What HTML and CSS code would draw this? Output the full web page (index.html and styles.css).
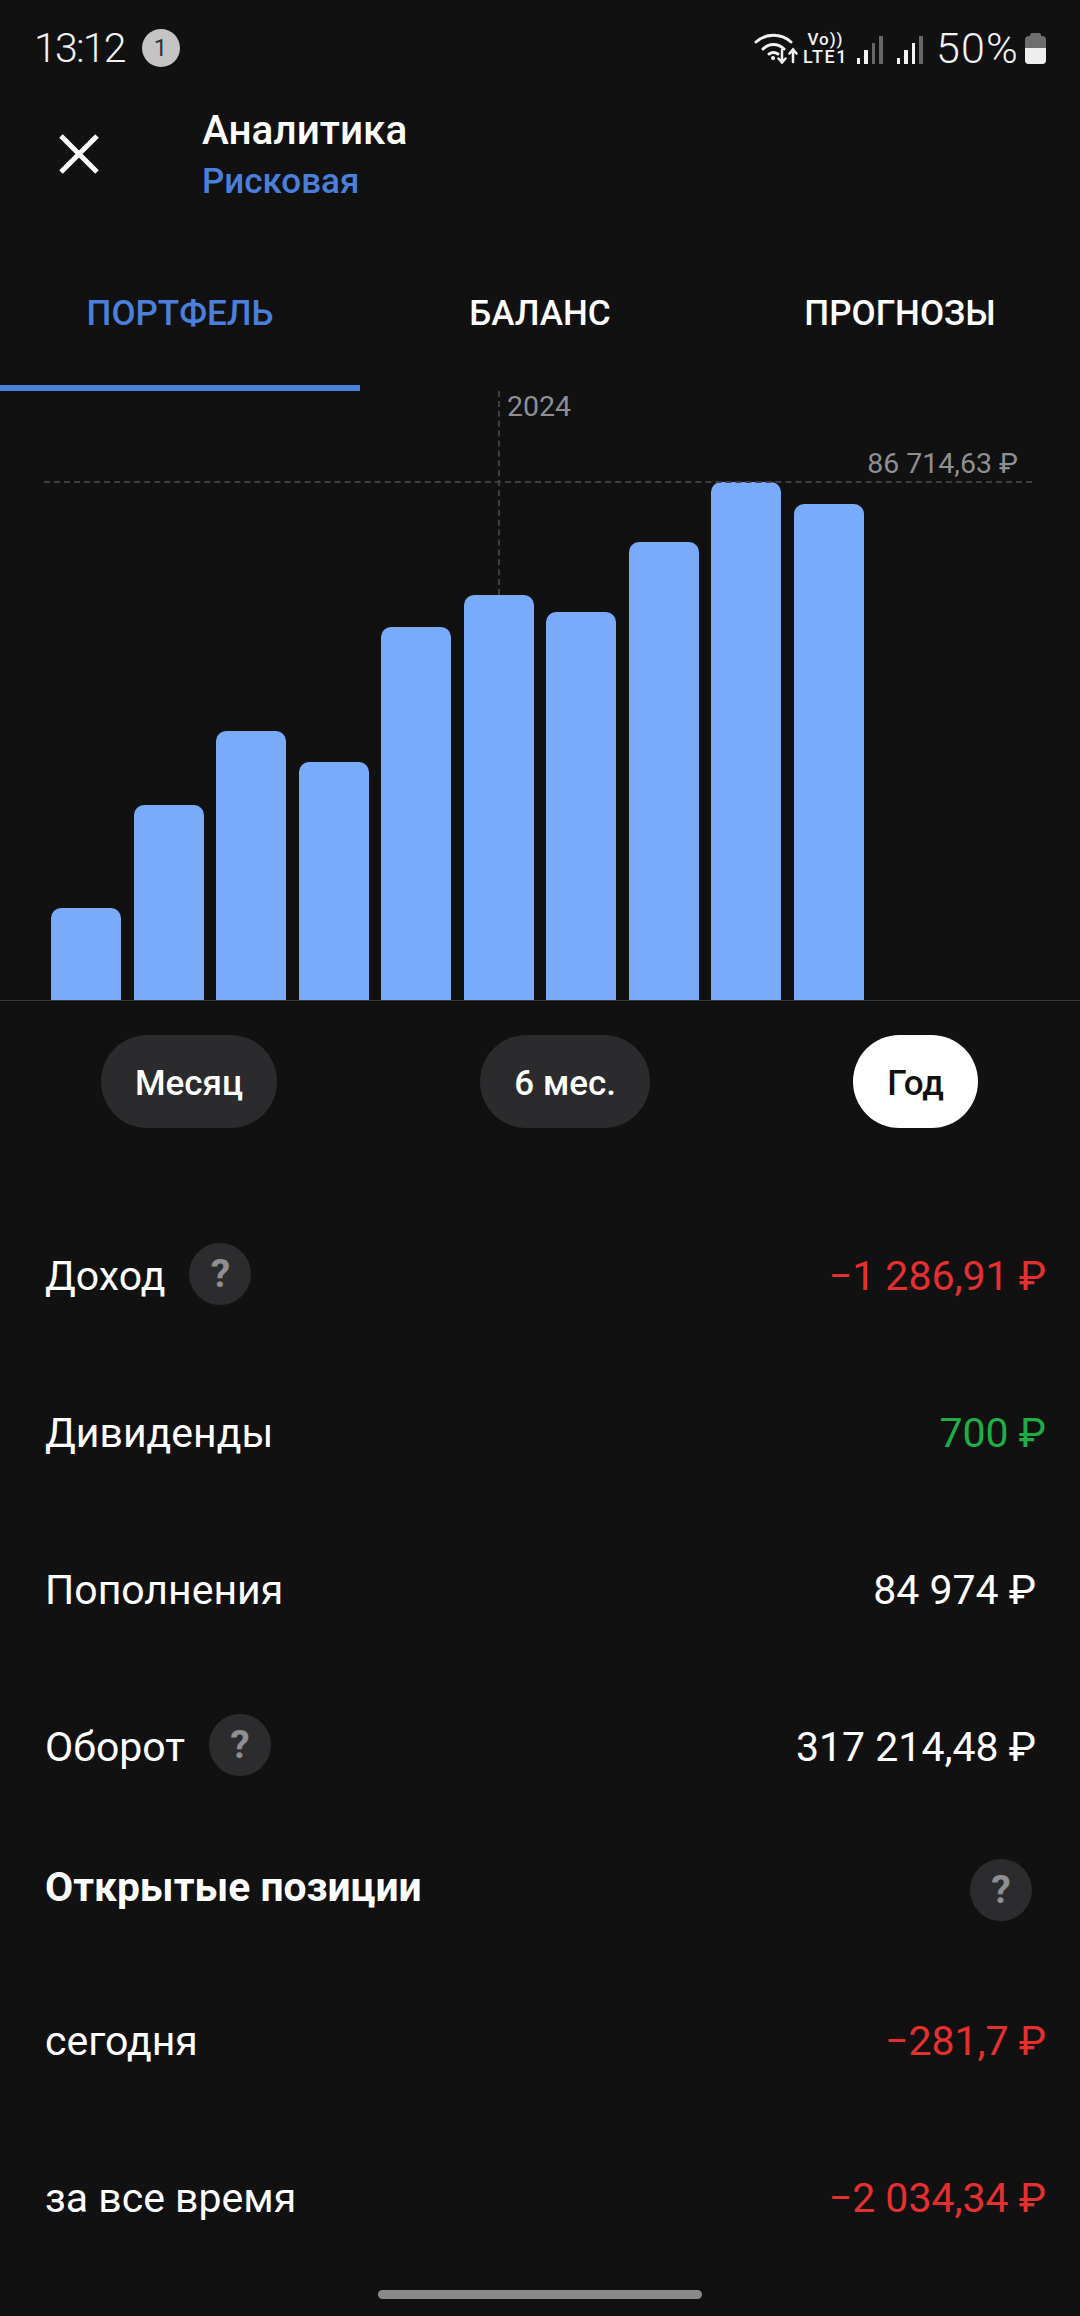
FILE: index.html
```html
<!DOCTYPE html>
<html lang="ru">
<head>
    <meta charset="UTF-8">
    <meta name="viewport" content="width=device-width, initial-scale=1.0">
    <title>Аналитика</title>
    <link rel="stylesheet" href="styles.css">
</head>
<body>

    <div class="status-bar">
        <div class="status-left">
            <span class="clock">13:12</span>
            <span class="notif">1</span>
        </div>
        <div class="status-right">
            <svg class="wifi" width="44" height="32" viewBox="0 0 44 32" fill="none" stroke="#f2f2f2" stroke-width="3" stroke-linecap="round">
                <path d="M2 10C12 1 27 1 37 10"/>
                <path d="M9 17C15 11 24 11 30 17"/>
                <path d="M15 22C18 20 21 20 24 22"/>
                <circle cx="19" cy="26" r="2" fill="#f2f2f2" stroke="none"/>
                <path d="M28 18V30M24.500 26.500L28 30.500L31.500 26.500" stroke-width="2.500"/>
                <path d="M39 30V18M35.500 21.500L39 17.500L42.500 21.500" stroke-width="2.500"/>
            </svg>
            <div class="volte">
                <span class="volte-top">Vo))</span>
                <span class="volte-bottom">LTE1</span>
            </div>
            <div class="signal signal-first">
                <i class="s1"></i><i class="s2"></i><i class="s3 dim"></i><i class="s4 dim"></i>
            </div>
            <div class="signal">
                <i class="s1"></i><i class="s2"></i><i class="s3"></i><i class="s4 dim"></i>
            </div>
            <span class="percent">50%</span>
            <div class="battery"><div class="battery-fill"></div></div>
        </div>
    </div>

    <div class="header">
        <svg class="close" width="44" height="44" viewBox="0 0 44 44" stroke="#fff" stroke-width="5">
            <path d="M4 4L40 40M40 4L4 40"/>
        </svg>
        <div class="header-text">
            <div class="title">Аналитика</div>
            <div class="subtitle">Рисковая</div>
        </div>
    </div>

    <div class="tabs">
        <div class="tab active">ПОРТФЕЛЬ</div>
        <div class="tab">БАЛАНС</div>
        <div class="tab">ПРОГНОЗЫ</div>
    </div>

    <div class="chart">
        <div class="bars">
            <div class="bar" style="height: 92px"></div>
            <div class="bar" style="height: 195px"></div>
            <div class="bar" style="height: 269px"></div>
            <div class="bar" style="height: 238px"></div>
            <div class="bar" style="height: 373px"></div>
            <div class="bar" style="height: 405px"></div>
            <div class="bar" style="height: 388px"></div>
            <div class="bar" style="height: 458px"></div>
            <div class="bar" style="height: 518px"></div>
            <div class="bar" style="height: 496px"></div>
        </div>
        <div class="year-line"></div>
        <div class="year-label">2024</div>
        <div class="max-line"></div>
        <div class="max-label">86 714,63 ₽</div>
    </div>

    <div class="periods">
        <div class="pill">Месяц</div>
        <div class="pill">6 мес.</div>
        <div class="pill selected">Год</div>
    </div>

    <div class="stats">
        <div class="row">
            <div class="row-label">Доход <span class="help">?</span></div>
            <div class="value red">−1 286,91 ₽</div>
        </div>
        <div class="row">
            <div class="row-label">Дивиденды</div>
            <div class="value green">700 ₽</div>
        </div>
        <div class="row">
            <div class="row-label">Пополнения</div>
            <div class="value plain">84 974 ₽</div>
        </div>
        <div class="row">
            <div class="row-label">Оборот <span class="help">?</span></div>
            <div class="value plain">317 214,48 ₽</div>
        </div>
        <div class="section-head">
            <div class="section-title">Открытые позиции</div>
            <span class="help section-help">?</span>
        </div>
        <div class="row">
            <div class="row-label">сегодня</div>
            <div class="value red">−281,7 ₽</div>
        </div>
        <div class="row">
            <div class="row-label">за все время</div>
            <div class="value red">−2 034,34 ₽</div>
        </div>
    </div>

    <div class="home-bar"></div>

</body>
</html>
```

FILE: styles.css
```css
* {
    box-sizing: border-box;
}

html, body {
    margin: 0;
    padding: 0;
}

body {
    width: 1080px;
    height: 2316px;
    overflow: hidden;
    background-color: #111112;
    color: #fff;
    font-family: Roboto, "Noto Sans", sans-serif;
}

/* status bar */
.status-bar {
    height: 96px;
    padding: 0 34px;
    display: flex;
    justify-content: space-between;
    align-items: center;
}

.status-left {
    display: flex;
    align-items: center;
    gap: 17px;
}

.clock {
    font-size: 41px;
    font-weight: 300;
    letter-spacing: -1.800px;
    color: #f2f2f2;
}

.notif {
    width: 38px;
    height: 38px;
    border-radius: 50%;
    background-color: #c4c4c4;
    color: #333;
    font-size: 24px;
    display: flex;
    justify-content: center;
    align-items: center;
}

.status-right {
    display: flex;
    align-items: center;
}

.wifi {
    margin-right: 5px;
}

.volte {
    display: flex;
    flex-direction: column;
    align-items: center;
    color: #f2f2f2;
    font-weight: 500;
    line-height: 18px;
}

.volte-top {
    font-size: 17px;
    letter-spacing: 1px;
}

.volte-bottom {
    font-size: 18px;
    letter-spacing: 1.500px;
}

.signal {
    display: flex;
    align-items: flex-end;
    gap: 4px;
    height: 28px;
    margin-left: 14px;
    margin-top: 4px;
}

.signal-first {
    margin-left: 9px;
}

.signal i {
    display: block;
    width: 3.500px;
    background-color: #f2f2f2;
}

.signal .dim {
    background-color: #666;
}

.signal .s1 { height: 6px; }
.signal .s2 { height: 14px; }
.signal .s3 { height: 21px; }
.signal .s4 { height: 28px; }

.percent {
    font-size: 43px;
    font-weight: 300;
    letter-spacing: 1.200px;
    color: #f2f2f2;
    margin-left: 13px;
}

.battery {
    position: relative;
    width: 21px;
    height: 28px;
    margin-left: 6px;
    margin-top: 4px;
    border-radius: 4px;
    background-color: #6e6e6e;
    display: flex;
    align-items: flex-end;
}

.battery::before {
    content: "";
    position: absolute;
    left: 5px;
    top: -3px;
    width: 11px;
    height: 4px;
    border-radius: 2px 2px 0 0;
    background-color: #6e6e6e;
}

.battery-fill {
    width: 100%;
    height: 16px;
    border-radius: 0 0 4px 4px;
    background-color: #eee;
}

/* header */
.header {
    height: 126px;
    display: flex;
    align-items: center;
}

.close {
    margin-left: 57px;
    margin-right: 101px;
    margin-top: -10px;
}

.header-text {
    margin-top: -5px;
}

.title {
    font-size: 40.500px;
    font-weight: 500;
    line-height: 49px;
}

.subtitle {
    font-size: 35px;
    font-weight: 500;
    line-height: 53px;
    color: #4a80dc;
}

/* tabs */
.tabs {
    height: 169px;
    display: flex;
}

.tab {
    width: 360px;
    padding-top: 70px;
    font-size: 35px;
    font-weight: 500;
    line-height: 44px;
    text-align: center;
}

.tab.active {
    color: #4a80dc;
    border-bottom: 6px solid #4a80dc;
}

/* chart */
.chart {
    position: relative;
    height: 610px;
    border-bottom: 1px solid #3a3a3c;
}

.bars {
    height: 100%;
    padding-left: 51px;
    display: flex;
    align-items: flex-end;
    gap: 12.500px;
}

.bar {
    width: 70px;
    background-color: #7aabfb;
    border-radius: 10px 10px 0 0;
}

.year-line {
    position: absolute;
    left: 498px;
    top: 0;
    height: 204px;
    border-left: 2px dashed #3e3e40;
}

.year-label {
    position: absolute;
    left: 507px;
    top: 1px;
    font-size: 28.500px;
    line-height: 30px;
    color: #8e8e93;
}

.max-line {
    position: absolute;
    left: 44px;
    right: 48px;
    top: 90px;
    border-top: 2px dashed #3e3e40;
}

.max-label {
    position: absolute;
    right: 62px;
    top: 58px;
    font-size: 28.500px;
    line-height: 30px;
    color: #8e8e93;
}

/* period switch */
.periods {
    margin-top: 34px;
    padding: 0 102px 0 101px;
    display: flex;
    justify-content: space-between;
}

.pill {
    height: 93px;
    padding: 3px 34px 0;
    border-radius: 47px;
    background-color: #2b2b2d;
    font-size: 35px;
    font-weight: 500;
    display: flex;
    align-items: center;
}

.pill.selected {
    background-color: #fff;
    color: #111;
}

/* stats list */
.stats {
    margin-top: 69px;
}

.row {
    height: 157px;
    padding: 0 34px 0 45px;
    display: flex;
    justify-content: space-between;
    align-items: center;
    font-size: 41px;
}

.row-label {
    display: flex;
    align-items: center;
    gap: 24px;
}

.value.plain {
    margin-right: 10px;
}

.red {
    color: #e5302f;
}

.green {
    color: #1fae46;
}

.help {
    width: 62px;
    height: 62px;
    border-radius: 50%;
    background-color: #2c2c2e;
    color: #8e8e93;
    font-size: 39px;
    font-weight: 700;
    display: flex;
    justify-content: center;
    align-items: center;
    margin-top: -3px;
}

.section-head {
    height: 137px;
    padding: 0 48px 14px 45px;
    display: flex;
    justify-content: space-between;
    align-items: center;
}

.section-title {
    font-size: 40.800px;
    font-weight: 700;
}

.section-help {
    margin-top: 6px;
}

.home-bar {
    width: 324px;
    height: 9px;
    margin: 14px auto 0;
    border-radius: 5px;
    background-color: #8a8a8c;
}
```
